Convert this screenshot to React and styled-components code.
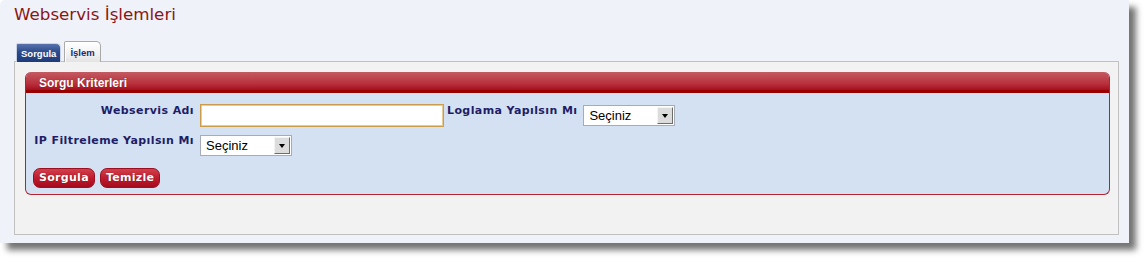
import styled, { createGlobalStyle } from "styled-components";

const GlobalStyle = createGlobalStyle`
  html, body {
    margin: 0;
    padding: 0;
    background: #fff;
  }
  body {
    font-family: "DejaVu Sans", Verdana, sans-serif;
  }
`;

const Page = styled.div`
  padding-bottom: 17px;
`;

const Window = styled.div`
  box-sizing: border-box;
  width: 1129px;
  height: 243px;
  padding: 0 10px 8px 14px;
  background: #eff3f9;
  border-radius: 5px 0 0 0;
  box-shadow: 7px 7px 6px rgba(0, 0, 0, 0.55);
  display: flex;
  flex-direction: column;
`;

const Title = styled.h1`
  margin: 0;
  padding-top: 4px;
  height: 37px;
  box-sizing: border-box;
  font-size: 16.7px;
  line-height: 20px;
  font-weight: normal;
  color: #8c1515;
`;

const TabBar = styled.div`
  display: flex;
  align-items: flex-end;
  gap: 3px;
  padding-left: 2px;
  height: 25px;
  position: relative;
  z-index: 1;
`;

const Tab = styled.div`
  box-sizing: border-box;
  height: ${p => (p.$active ? "19px" : "21px")};
  padding: 0 ${p => (p.$active ? "4px" : "5px")};
  display: flex;
  align-items: center;
  font-family: "Liberation Sans", Arial, sans-serif;
  font-size: 9.5px;
  font-weight: bold;
  border-radius: 2px 5px 0 0;
  color: ${p => (p.$active ? "#fff" : "#1c2a70")};
  background: ${p =>
    p.$active
      ? "linear-gradient(#5873ad, #2c4a8c 45%, #1f3b7a)"
      : "linear-gradient(#ffffff, #f1f1f1 60%, #e3e3e3)"};
  border: 1px solid ${p => (p.$active ? "#c9d3e6" : "#a9a9a9")};
  border-bottom: none;
  box-shadow: ${p => (p.$active ? "none" : "inset 1px 1px 0 #fff")};
`;

const Panel = styled.div`
  flex: 1;
  margin-top: -1px;
  border: 1px solid #c0c0c0;
  background: #f2f2f2;
  padding: 10px 8px 0 10px;
`;

const Fieldset = styled.div`
  border: 1px solid #b32233;
  border-top: none;
  border-radius: 6px;
  overflow: hidden;
  background: #d4e1f2;
`;

const Legend = styled.div`
  height: 21px;
  box-sizing: border-box;
  padding: 1px 0 0 13px;
  display: flex;
  align-items: center;
  font-family: "Liberation Sans", Arial, sans-serif;
  font-size: 12px;
  font-weight: bold;
  color: #fff;
  text-shadow: 0 0 1px rgba(80, 0, 0, 0.6);
  background: linear-gradient(#c45a62, #b8313c 55%, #a51020 85%, #990000 85%);
`;

const Body = styled.div`
  padding: 11px 0 6px 0;
`;

const FormGrid = styled.div`
  display: grid;
  grid-template-columns: 168px 244px auto auto;
  column-gap: 6px;
  row-gap: 7px;
  justify-content: start;
  align-items: start;
`;

const Label = styled.label`
  font-size: 11px;
  line-height: 14px;
  font-weight: bold;
  letter-spacing: 0.4px;
  color: #1e1e66;
  margin-left: ${p => (p.$left ? "-3px" : "0")};
  text-align: ${p => (p.$left ? "left" : "right")};
  white-space: nowrap;
`;

const TextInput = styled.input`
  box-sizing: border-box;
  width: 244px;
  height: 23px;
  margin: 0;
  border: 1px solid #c99d4c;
  box-shadow: inset 0 0 0 1px #e6cc92;
  background: #fff;
  outline: none;
  padding: 2px 4px;
  font-family: "Liberation Sans", Arial, sans-serif;
  font-size: 13px;
`;

const SelectWrap = styled.div`
  position: relative;
  width: 92px;
  height: 21px;
  margin-top: 1px;
`;

const Select = styled.select`
  appearance: none;
  box-sizing: border-box;
  width: 100%;
  height: 100%;
  margin: 0;
  border: 1px solid #a5acb5;
  border-radius: 0;
  background: #fff;
  padding: 0 0 0 5px;
  font-family: "Liberation Sans", Arial, sans-serif;
  font-size: 13px;
  color: #000;
  outline: none;
`;

const Arrow = styled.span`
  position: absolute;
  top: 2px;
  right: 2px;
  bottom: 2px;
  width: 16px;
  box-sizing: border-box;
  background: #dcdcdc;
  border: 1px solid;
  border-color: #f4f4f4 #6d6d6d #6d6d6d #f4f4f4;
  pointer-events: none;
  display: flex;
  align-items: center;
  justify-content: center;

  &::after {
    content: "";
    border-left: 3.5px solid transparent;
    border-right: 3.5px solid transparent;
    border-top: 4px solid #000;
  }
`;

const Buttons = styled.div`
  display: flex;
  gap: 5px;
  margin: 12px 0 0 7px;
`;

const Button = styled.button`
  box-sizing: border-box;
  height: 20px;
  padding: 0 5px;
  border: 1px solid #9a1020;
  border-radius: 7px;
  background: linear-gradient(#d2404c, #bf1c2e 50%, #a50b1d);
  color: #fff;
  font-family: "DejaVu Sans", Verdana, sans-serif;
  font-size: 11px;
  font-weight: bold;
  letter-spacing: 0.3px;
  line-height: 18px;
  cursor: pointer;
  text-shadow: 0 0 1px rgba(90, 0, 0, 0.7);
`;

const SeciniSelect = () => (
  <SelectWrap>
    <Select defaultValue="">
      <option value="">Seçiniz</option>
      <option value="E">Evet</option>
      <option value="H">Hayır</option>
    </Select>
    <Arrow />
  </SelectWrap>
);

export default function App() {
  return (
    <Page>
      <GlobalStyle />
      <Window>
        <Title>Webservis İşlemleri</Title>
        <TabBar>
          <Tab $active>Sorgula</Tab>
          <Tab>İşlem</Tab>
        </TabBar>
        <Panel>
          <Fieldset>
            <Legend>Sorgu Kriterleri</Legend>
            <Body>
              <FormGrid>
                <Label>Webservis Adı</Label>
                <TextInput type="text" />
                <Label $left>Loglama Yapılsın Mı</Label>
                <SeciniSelect />
                <Label>IP Filtreleme Yapılsın Mı</Label>
                <SeciniSelect />
              </FormGrid>
              <Buttons>
                <Button>Sorgula</Button>
                <Button>Temizle</Button>
              </Buttons>
            </Body>
          </Fieldset>
        </Panel>
      </Window>
    </Page>
  );
}
